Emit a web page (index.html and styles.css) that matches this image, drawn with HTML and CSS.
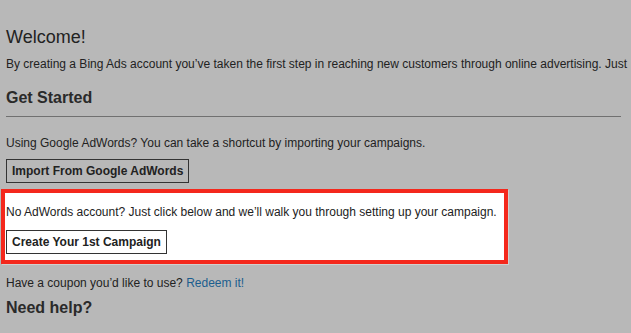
FILE: index.html
```html
<!DOCTYPE html>
<html lang="en">
<head>
    <meta charset="UTF-8">
    <meta name="viewport" content="width=device-width, initial-scale=1.0">
    <title>Welcome</title>
    <link rel="stylesheet" href="styles.css">
</head>
<body>
    <div class="page">
        <h1>Welcome!</h1>
        <p class="intro">By creating a Bing Ads account you&rsquo;ve taken the first step in reaching new customers through online advertising. Just</p>

        <h2 class="section-title">Get Started</h2>

        <p>Using Google AdWords? You can take a shortcut by importing your campaigns.</p>
        <button class="action-button">Import From Google AdWords</button>

        <div class="highlight">
            <p>No AdWords account? Just click below and we&rsquo;ll walk you through setting up your campaign.</p>
            <button class="action-button">Create Your 1st Campaign</button>
        </div>

        <p class="coupon">Have a coupon you&rsquo;d like to use? <a href="#">Redeem it!</a></p>

        <h2>Need help?</h2>
    </div>
</body>
</html>
```

FILE: styles.css
```css
body {
    margin: 0;
    background-color: #b8b8b8;
    color: #222222;
    font-family: "Liberation Sans", Arial, Helvetica, sans-serif;
    overflow: hidden;
}

.page {
    padding: 27px 0 0 6px;
}

h1 {
    font-size: 18px;
    font-weight: normal;
    margin: 0 0 8px 0;
    line-height: 21px;
}

h2 {
    font-size: 16px;
    font-weight: bold;
    color: #2a2a2a;
    margin: 0;
    line-height: 19px;
}

p {
    font-size: 12px;
    margin: 0;
    line-height: 16px;
    white-space: nowrap;
}

.intro {
    margin-bottom: 16px;
}

.section-title {
    padding-bottom: 9px;
    border-bottom: 1px solid #707070;
    width: 615px;
    margin-bottom: 18px;
}

.action-button {
    display: block;
    font-family: "Liberation Sans", Arial, Helvetica, sans-serif;
    font-size: 12px;
    font-weight: bold;
    color: #222222;
    background: transparent;
    border: 1px solid #333333;
    padding: 0 5px;
    height: 24px;
    margin-top: 8px;
    cursor: pointer;
}

.highlight {
    width: 498px;
    margin: 6px 0 0 -5px;
    padding: 11px 0 6px 1px;
    background-color: #ffffff;
    border: 4px solid #f4281c;
    box-shadow: 1px 1px 0 #d0d0d0;
}

.highlight .action-button {
    margin-top: 10px;
}

.coupon {
    margin-top: 11px;
    margin-bottom: 7px;
}

.coupon a {
    color: #1b5e8e;
    text-decoration: none;
}
```
